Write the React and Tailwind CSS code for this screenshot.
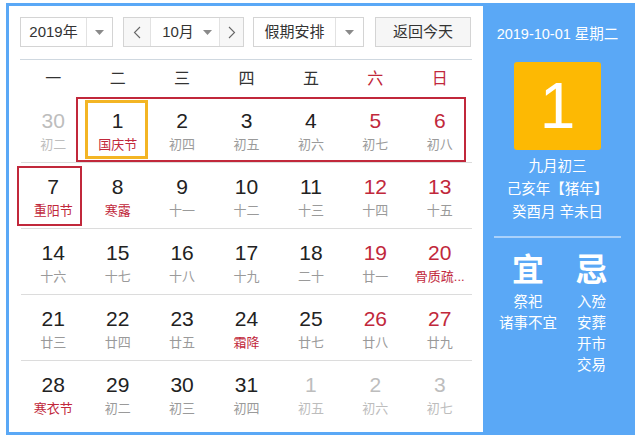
const FONT = { fontFamily: '"Liberation Sans", "Noto Sans CJK SC", sans-serif' };

const weeks = [
  [
    { d: 30, l: "初二", other: true },
    { d: 1, l: "国庆节", fest: true },
    { d: 2, l: "初四" },
    { d: 3, l: "初五" },
    { d: 4, l: "初六" },
    { d: 5, l: "初七", red: true },
    { d: 6, l: "初八", red: true },
  ],
  [
    { d: 7, l: "重阳节", fest: true },
    { d: 8, l: "寒露", fest: true },
    { d: 9, l: "十一" },
    { d: 10, l: "十二" },
    { d: 11, l: "十三" },
    { d: 12, l: "十四", red: true },
    { d: 13, l: "十五", red: true },
  ],
  [
    { d: 14, l: "十六" },
    { d: 15, l: "十七" },
    { d: 16, l: "十八" },
    { d: 17, l: "十九" },
    { d: 18, l: "二十" },
    { d: 19, l: "廿一", red: true },
    { d: 20, l: "骨质疏...", red: true, fest: true },
  ],
  [
    { d: 21, l: "廿三" },
    { d: 22, l: "廿四" },
    { d: 23, l: "廿五" },
    { d: 24, l: "霜降", fest: true },
    { d: 25, l: "廿七" },
    { d: 26, l: "廿八", red: true },
    { d: 27, l: "廿九", red: true },
  ],
  [
    { d: 28, l: "寒衣节", fest: true },
    { d: 29, l: "初二" },
    { d: 30, l: "初三" },
    { d: 31, l: "初四" },
    { d: 1, l: "初五", other: true },
    { d: 2, l: "初六", other: true },
    { d: 3, l: "初七", other: true },
  ],
];

function Caret() {
  return (
    <svg width="9" height="5" viewBox="0 0 9 5">
      <path d="M0 0h9L4.5 5z" fill="#8a8a8a" />
    </svg>
  );
}

function Chevron({ dir }) {
  return (
    <svg width="8" height="13" viewBox="0 0 8 13">
      <path
        d={dir === "left" ? "M7 1L1.5 6.5L7 12" : "M1 1l5.5 5.5L1 12"}
        fill="none"
        stroke="#666"
        strokeWidth="1.1"
      />
    </svg>
  );
}

function Controls() {
  return (
    <div className="flex h-[30px] text-[15px] text-[#333]">
      <div className="flex w-[93px] border border-[#d4d4d4] bg-white">
        <div className="flex w-[66px] items-center justify-center border-r border-[#e2e2e2]">2019年</div>
        <div className="flex flex-1 items-center justify-center">
          <Caret />
        </div>
      </div>
      <div className="ml-[10px] flex w-[121px] border border-[#d4d4d4] bg-white">
        <div className="flex w-[27px] items-center justify-center border-r border-[#e2e2e2] bg-[#f7f7f7]">
          <Chevron dir="left" />
        </div>
        <div className="flex w-[68px] items-center justify-center gap-[9px] pl-[4px]">
          <span>10月</span>
          <Caret />
        </div>
        <div className="flex flex-1 items-center justify-center border-l border-[#e2e2e2] bg-[#f7f7f7]">
          <Chevron dir="right" />
        </div>
      </div>
      <div className="ml-[9px] flex w-[111px] border border-[#d4d4d4] bg-white">
        <div className="flex w-[82px] items-center justify-center border-r border-[#e2e2e2]">假期安排</div>
        <div className="flex flex-1 items-center justify-center">
          <Caret />
        </div>
      </div>
      <div className="ml-[11px] flex w-[96px] items-center justify-center border border-[#d4d4d4] bg-[#f6f6f6]">
        返回今天
      </div>
    </div>
  );
}

function Cell({ c }) {
  const numColor = c.other ? "text-[#bdbdbd]" : c.red ? "text-[#c1283b]" : "text-[#222]";
  const lunColor = c.other ? "text-[#bdbdbd]" : c.fest ? "text-[#c1283b]" : "text-[#9a9a9a]";
  return (
    <div className="flex h-[65px] flex-col items-center pt-[11px]">
      <div className={`text-[21px] leading-[26px] ${numColor}`}>{c.d}</div>
      <div className={`mt-[2px] whitespace-nowrap text-[13px] leading-[18px] ${lunColor}`}>{c.l}</div>
    </div>
  );
}

function Grid() {
  const heads = ["一", "二", "三", "四", "五", "六", "日"];
  return (
    <div className="w-[452px]">
      <div className="mt-[12px] grid h-[38px] grid-cols-7 border-t border-[#cfd8e0] pl-px">
        {heads.map((h, i) => (
          <div
            key={h}
            className={`flex items-center justify-center text-[16px] ${i >= 5 ? "text-[#c1283b]" : "text-[#333]"}`}
          >
            {h}
          </div>
        ))}
      </div>
      <div className="relative pl-px">
        {weeks.map((w, r) => (
          <div key={r} className={`grid grid-cols-7 ${r === 0 ? "" : "border-t border-[#dcdcdc]"}`}>
            {w.map((c, i) => (
              <Cell key={i} c={c} />
            ))}
          </div>
        ))}
        <div className="pointer-events-none absolute left-[56px] top-[0px] h-[65px] w-[390px] border-2 border-[#c1283b]" />
        <div className="pointer-events-none absolute left-[65px] top-[3px] h-[59px] w-[63px] border-[3px] border-[#f3b524]" />
        <div className="pointer-events-none absolute left-[-3px] top-[69px] h-[60px] w-[65px] border-2 border-[#c1283b]" />
      </div>
    </div>
  );
}

function SidePanel() {
  return (
    <div className="flex w-[149px] flex-col items-center bg-[#5aa8f6] text-white">
      <div className="mt-[18px] text-[14.5px] leading-[20px]">2019-10-01 星期二</div>
      <div className="mt-[18px] flex h-[88px] w-[87px] items-center justify-center rounded-[3px] bg-[#fdb903] text-[64px] leading-none">
        1
      </div>
      <div className="mt-[5px] flex flex-col items-center text-[14.5px] leading-[23px]">
        <div>九月初三</div>
        <div>己亥年【猪年】</div>
        <div>癸酉月 辛未日</div>
      </div>
      <div className="mt-[12px] h-[2px] w-[127px] bg-[#a9d1fb]" />
      <div className="mt-[12px] flex w-[127px]">
        <div className="flex w-[68px] flex-col items-center">
          <div className="text-[32px] font-semibold leading-[40px]">宜</div>
          <div className="mt-[2px] flex flex-col items-center text-[14.5px] leading-[21px]">
            <div>祭祀</div>
            <div>诸事不宜</div>
          </div>
        </div>
        <div className="flex flex-1 flex-col items-center">
          <div className="text-[32px] font-semibold leading-[40px]">忌</div>
          <div className="mt-[2px] flex flex-col items-center text-[14.5px] leading-[21px]">
            <div>入殓</div>
            <div>安葬</div>
            <div>开市</div>
            <div>交易</div>
          </div>
        </div>
      </div>
    </div>
  );
}

export default function App() {
  return (
    <div className="h-[439px] w-[640px] bg-white pl-[6px] pt-[3px]" style={FONT}>
      <div className="flex h-[432px] w-[629px] border-[3px] border-[#5aa8f6]">
        <div className="flex w-[474px] flex-col bg-white pl-[11px] pt-[11px]">
          <Controls />
          <Grid />
        </div>
        <SidePanel />
      </div>
    </div>
  );
}
